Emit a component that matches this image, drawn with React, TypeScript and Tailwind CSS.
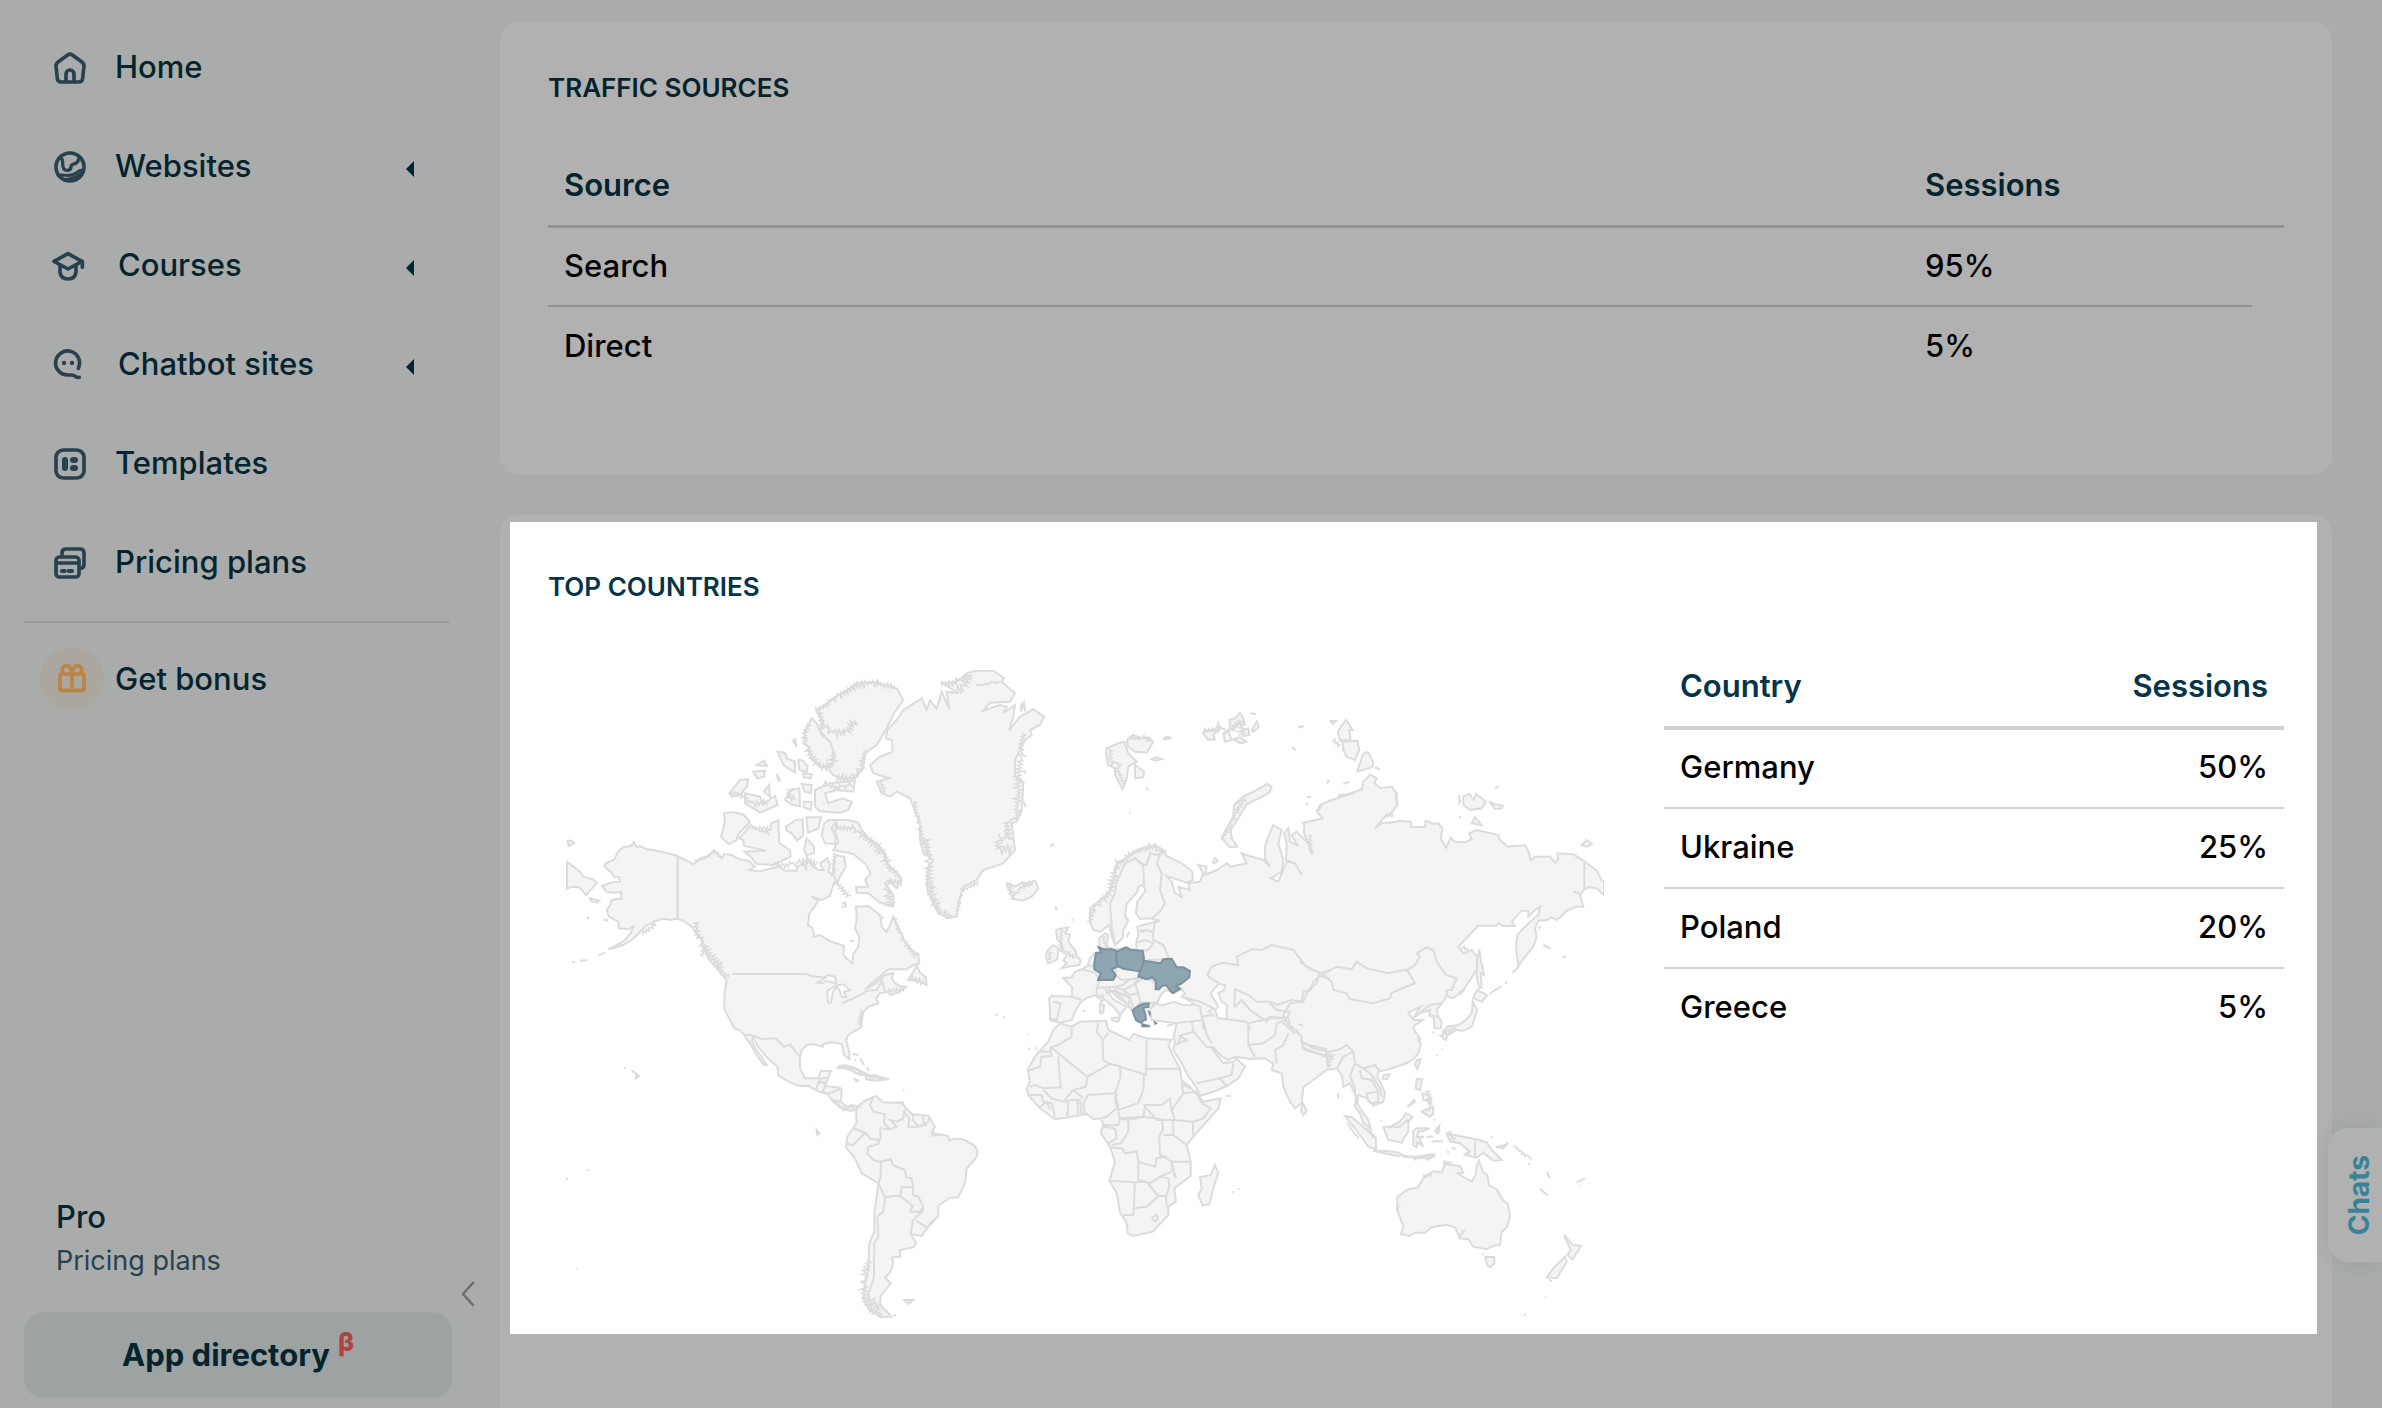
import React from 'react';

type Origin = [number, number];

// Outlines are digitised per map sheet, three units to one pixel.
const NW: Origin = [540, 650];
const GREENLAND: Origin = [700, 650];
const EUROPE: Origin = [1000, 700];
const SIBERIA: Origin = [1280, 680];
const AMERICAS: Origin = [540, 940];
const AFRICA: Origin = [1000, 960];
const ASIA: Origin = [1300, 960];

const on = (origin: Origin, points: string): string =>
  points
    .trim()
    .split(/\s+/)
    .map((pair) => {
      const [x, y] = pair.split(',').map(Number);
      return `${(origin[0] + x / 3).toFixed(1)},${(origin[1] + y / 3).toFixed(1)}`;
    })
    .join(' ');

// Jagged line along a coast, used where the shore is cut by many inlets
const fjords = (origin: Origin, points: string, depth = 3): string => {
  const pts = on(origin, points).split(' ').map((p) => p.split(',').map(Number));
  const out: string[] = [];
  let step = 0;
  for (let i = 0; i < pts.length - 1; i++) {
    const [x1, y1] = pts[i];
    const [x2, y2] = pts[i + 1];
    const length = Math.hypot(x2 - x1, y2 - y1) || 1;
    const count = Math.max(1, Math.round(length / 1.8));
    for (let k = 0; k < count; k++) {
      const t = k / count;
      const noise = Math.abs(Math.sin(step * 12.9898) * 43758.5453) % 1;
      const offset = (step % 2 === 0 ? 1 : -1) * depth * noise;
      const x = x1 + (x2 - x1) * t - ((y2 - y1) / length) * offset;
      const y = y1 + (y2 - y1) * t + ((x2 - x1) / length) * offset;
      out.push(`${x.toFixed(1)},${y.toFixed(1)}`);
      step++;
    }
  }
  return out.join(' ');
};

const land: string[] = [
  // North and Central America
  on(NW, '413,618 385,610 340,600 320,598 300,588 291,592 281,577 272,588 250,592 235,604 222,630 197,640 194,650 215,668 222,680 238,682 240,695 215,697 186,708 200,725 222,728 243,726 245,745 215,750 210,765 200,780 207,800 235,815 237,835 265,838 280,830 272,850 255,870 235,882 210,897 225,893 250,885 275,870 300,845 320,825 340,818 355,810 372,806 390,810 413,806'),
  [
    on(NW, '413,618 460,643 480,625 505,618 522,600 535,615 545,625 553,612 575,615 600,628 625,632 645,650 628,660 660,664 695,655 720,650 735,662 770,662 772,650 790,640 798,655 800,620 815,645 835,660 850,660 840,640 862,625 870,645 865,665 875,675 882,650 885,615 912,620 918,650 905,670 895,690 880,705 870,738 845,750 815,740 835,752 820,775 808,790 804,825 818,835 822,860 840,855 870,873 912,888 910,915 925,930 937,940 940,912 955,890 958,860 945,835 950,810 948,770 985,768 1020,795 1025,830 1040,845 1050,825 1060,800 1075,835 1090,865 1100,885 1120,905 1135,912'),
    on(AMERICAS, '1135,45 1138,70 1115,78 1100,88 1045,88 1010,118 975,148 1000,135 1035,105 1060,98 1055,115 1065,130 1080,138 1098,140 1075,158 1050,165 1045,155 1020,160 1008,175 1015,190 985,200 970,215 965,240 962,262 925,285 918,300 928,335 928,357 912,345 905,312 875,307 850,312 848,320 820,312 800,315 785,330 780,350 780,385 795,415 835,415 843,393 872,393 865,415 855,438 900,443 905,450 903,485 920,500 935,495 955,500 948,510 930,512 905,505 880,485 862,462 830,452 805,438 778,438 750,427 715,407 712,380 680,352 650,315 640,290 635,300 645,325 665,350 680,375 672,375 650,345 630,310 612,285 600,270 583,265 565,230 553,205 553,165 560,120 530,85 505,55 490,10'),
    on(NW, '455,830 430,812 413,806'),
  ].join(' '),
  on(AMERICAS, '1105,120 1120,95 1130,78 1140,98 1158,112 1160,135 1145,128 1130,122'),
  // Arctic islands
  on(NW, '552,490 580,486 612,495 630,517 595,552 590,570 567,583 543,560 555,515'),
  on(NW, '632,525 640,530 665,545 690,540 695,520 715,510 718,580 750,600 752,620 720,635 700,645 650,642 630,618 612,605 678,602 612,588 610,570 598,565'),
  on(NW, '738,530 768,510 788,508 790,555 772,572 755,550 740,542'),
  on(NW, '800,502 843,502 835,535 805,548 800,520'),
  on(NW, '800,565 822,590 822,610 800,615 792,600'),
  on(NW, '852,522 865,510 890,510 875,535 888,560 885,582 855,580 845,555'),
  on(NW, '890,510 925,510 955,518 962,535 985,565 1015,585 1035,610 1042,640 1085,685 1070,715 1045,690 1035,700 1060,735 1060,770 1020,758 985,730 950,728 948,712 985,710 975,690 992,670 975,640 940,612 880,600 895,575 885,545'),
  on(NW, '830,185 850,170 885,140 915,125 950,100 1010,96 1070,115 1090,150 1062,190 1040,235 1010,285 975,310 970,355 945,385 905,388 880,375 865,358 880,320 870,280 840,240 850,215'),
  on(NW, '815,205 830,220 845,255 870,275 885,315 875,350 840,352 810,320 805,290 790,280 795,245'),
  on(NW, '945,392 940,425 890,420 855,430 865,460 910,445 935,455 925,480 900,488 840,484 825,470 825,420 870,400'),
  on(NW, '568,430 600,390 625,388 620,410 600,435 575,440'),
  on(NW, '615,430 660,440 670,462 705,438 713,465 660,488 615,460'),
  on(NW, '672,425 687,405 690,440'),
  on(NW, '755,418 778,415 780,468 758,465 735,450'),
  on(NW, '785,402 815,405 812,430 795,425'),
  on(NW, '790,455 815,455 812,480 792,472'),
  on(NW, '650,345 672,332 680,348'),
  on(NW, '640,365 675,362 672,380 652,385'),
  on(NW, '713,305 735,308 740,325 765,335 765,368 745,355 730,345'),
  on(NW, '775,330 790,332 803,350 800,365 778,360'),
  on(NW, '790,370 815,373 812,385 792,382'),
  on(NW, '758,272 766,268 770,290'),
  on(NW, '710,372 720,390 715,393'),
  on(NW, '83,572 95,572 103,580 86,588'),
  on(NW, '81,635 120,665 130,680 160,688 170,700 150,722 138,735 118,712 95,710 81,716'),
  on(NW, '150,745 178,752 172,758 155,755'),
  // Greenland and Iceland
  on(GREENLAND, '610,180 665,145 680,180 690,150 710,175 725,125 748,178 740,125 775,130 730,100 770,95 800,70 825,62 880,62 912,85 905,95 945,130 930,155 870,158 850,182 900,165 920,170 910,190 945,165 940,200 928,240 960,200 1000,178 1032,200 1020,225 990,240 995,255 975,270 960,300 945,330 945,380 970,395 968,440 965,480 950,515 935,520 940,560 945,600 910,640 850,660 830,690 790,710 775,760 770,800 745,805 715,790 695,750 680,710 685,650 700,630 670,610 660,570 660,520 630,445 590,425 570,440 545,430 530,395 568,385 520,370 510,345 540,320 578,305 575,270 558,265 562,240 590,210'),
  on(EUROPE, '20,550 45,560 65,548 80,550 105,542 115,565 95,590 68,602 35,595 45,580 25,570'),
  // Svalbard, Franz Josef Land, Novaya Zemlya
  on(EUROPE, '320,145 355,130 372,125 385,160 410,185 385,200 380,235 368,268 345,225 345,205 325,195 318,165'),
  on(EUROPE, '380,120 400,105 425,115 445,112 460,125 440,158 405,155 385,140'),
  on(EUROPE, '405,195 432,215 430,232 405,235'),
  on(EUROPE, '490,118 500,110 515,114'),
  on(EUROPE, '455,178 470,172 485,178 465,182'),
  on(EUROPE, '608,98 630,90 645,92 655,70 658,90 640,105 645,118 625,120'),
  on(EUROPE, '670,100 685,95 695,120 675,125'),
  on(EUROPE, '688,60 705,55 720,40 728,50 735,72 710,75 700,90 690,80'),
  on(EUROPE, '725,92 745,85 748,105 730,108'),
  on(EUROPE, '755,90 770,65 777,80 760,95'),
  on(EUROPE, '700,118 720,112 738,125 722,130'),
  on(EUROPE, '665,415 685,375 700,350 702,315 730,290 780,265 800,252 815,260 808,278 770,298 740,312 715,355 692,390 695,415 712,440 690,442'),
  on(SIBERIA, '173,155 198,120 218,150 208,150 212,178 180,182'),
  on(SIBERIA, '188,185 232,182 238,210 225,240 200,230 190,210'),
  on(SIBERIA, '232,275 248,225 258,215 268,222 280,250 278,260'),
  on(SIBERIA, '550,350 568,342 582,360 588,342 618,365 605,385 570,390 550,375'),
  on(SIBERIA, '628,365 645,373 668,377 665,385 645,387'),
  on(SIBERIA, '575,430 585,412 605,435'),
  on(SIBERIA, '905,495 920,480 935,492 920,500'),
  // Mainland Eurasia
  [
    on(EUROPE, '150,935 148,895 155,887 215,890 217,862 190,835 215,832 225,815 245,808 262,798 270,775 285,760 300,755 298,715 315,700 325,705 320,740 345,748 380,742 410,750 408,730 415,705 412,680 440,672 480,662 450,655 420,657 408,640 412,605 437,572 430,555 415,560 412,575 380,612 375,645 385,662 370,690 368,715 345,735 335,710 328,675 300,695 280,690 270,665 270,625 300,600 330,575 345,520 350,490 385,470 410,450 440,440 465,435 490,450 500,468 545,490 577,515 578,540 560,548 500,528 515,545 525,580 545,590 535,560 570,570 565,550 600,545 610,520 595,495 620,500 615,525 650,510 680,490 690,500 740,490 725,460 745,467 790,480 810,500 795,475 795,440 805,410 820,375 845,390 835,430 850,480 845,515 812,535 835,545 860,485 885,490 905,525 885,490 858,480 860,430 852,400 865,385 870,425 892,435 875,405 890,395 915,420 930,435 935,465 925,430 912,400 912,370'),
    on(SIBERIA, '70,428 128,415 112,395 120,375 150,362 200,345 245,328 250,305 270,284 290,295 283,308 300,325 335,320 350,340 352,375 335,398 310,415 285,445 305,430 350,425 355,422 392,425 395,440 435,442 437,422 460,432 475,430 487,445 482,475 498,503 512,473 525,485 555,487 575,478 568,460 590,450 655,465 658,478 683,500 735,496 745,512 752,540 765,530 810,530 825,548 835,538 832,520 880,523 915,545 950,572 965,600 972,605 972,645 950,625 925,622 912,630 900,645 910,680 890,680 860,692 832,720 815,712 800,720 775,722 765,745 770,770 760,800 735,830 715,858 708,800 712,765 740,735 775,705 780,680 765,690 745,710 745,692 725,692 695,725 705,738 670,738 655,730 650,737 595,737 535,800 550,820 575,810 592,830 590,870 577,890 540,945'),
    on(ASIA, '495,85 460,115 440,108 425,130 410,150 415,170 425,185 422,205 403,205 402,175 388,165 390,150 360,160 340,175 345,165 362,140 325,158 340,180 368,180 340,200 345,215 360,235 362,255 355,280 342,295 320,310 290,320 265,328 235,335 232,350 245,375 255,400 250,425 220,437 200,415 175,405 172,430 190,460 205,480 212,505 190,490 180,460 165,440 168,410 150,370 130,380 125,345 110,325 80,330 50,352 10,382'),
    on(AFRICA, '905,430 885,445 870,425 850,380 845,340 815,330 820,312 795,295 750,297 705,290 685,300 665,290 640,262 635,262 650,285 670,310 700,305 708,295 735,320 715,355 680,378 640,395 600,408 590,385 560,340 545,310 520,270 525,240 520,235 530,190 495,185 455,180 450,150 465,128 420,130 425,145 435,170 425,188 410,180 398,155 385,135 350,110 330,88 320,92 340,118 380,140 372,150 360,165 345,145 310,115 290,105 262,112 240,130 225,155 215,180 180,188 150,180'),
  ].join(' '),
  // British Isles and Mediterranean islands
  on(EUROPE, '168,690 190,685 205,682 195,700 210,705 205,725 225,750 232,770 242,780 238,795 205,800 185,805 200,790 190,782 200,765 180,750 185,730 172,720'),
  on(EUROPE, '140,755 160,735 175,745 172,778 145,790 138,770'),
  on(EUROPE, '300,888 308,885 310,900 303,905'),
  on(EUROPE, '300,912 312,915 310,938 300,940'),
  on(AFRICA, '335,175 360,172 355,185 335,180'),
  // Africa and Madagascar
  on(AFRICA, '180,190 215,200 240,185 318,182 325,210 388,240 400,222 440,235 515,240 505,255 520,290 540,325 545,360 570,380 600,415 610,425 662,415 655,445 580,530 560,555 572,605 572,648 523,685 528,725 505,740 505,765 458,815 400,828 383,820 380,790 360,757 350,700 328,662 345,605 330,560 303,520 310,490 300,475 280,478 260,462 215,470 165,478 120,445 85,405 80,385 90,365 83,330 105,290 145,245 160,210'),
  on(AFRICA, '645,615 655,640 640,685 628,732 608,737 595,705 605,685 600,652 632,645'),
  on(AFRICA, '908,430 920,452 910,465 903,450'),
  // South America and the Caribbean
  on(AMERICAS, '955,500 970,485 1008,468 1030,487 1085,490 1115,522 1165,527 1185,560 1175,578 1225,588 1228,602 1240,596 1270,598 1305,618 1313,635 1308,655 1280,685 1275,730 1255,772 1230,773 1195,797 1195,828 1165,860 1145,888 1112,883 1128,908 1120,922 1080,930 1080,950 1055,952 1060,970 1050,998 1035,1012 1052,1030 1022,1068 1020,1090 1030,1105 1055,1130 1020,1132 985,1105 970,1075 975,1030 985,990 988,910 1003,875 1003,825 1015,730 965,700 945,655 918,622 922,590 940,565 950,548 948,510'),
  on(AMERICAS, '1092,1080 1120,1080 1105,1092'),
  on(AMERICAS, '890,385 912,375 940,382 985,405 960,405 930,390 905,383'),
  on(AMERICAS, '978,408 1005,405 1030,415 1048,418 1005,422 980,418'),
  on(AMERICAS, '945,418 958,422 948,423'),
  on(AMERICAS, '287,400 297,408 288,415'),
  on(AMERICAS, '830,570 838,580 832,585'),
  // Japan, Sakhalin, South East Asia
  on(SIBERIA, '598,808 603,845 612,885 602,880 605,920 598,925 590,890 592,840'),
  on(ASIA, '530,90 562,105 545,125 520,115'),
  on(ASIA, '518,125 532,150 522,180 515,200 490,212 470,210 445,225 430,215 440,200 475,195 495,182 515,160'),
  on(ASIA, '430,215 442,225 438,240 428,235'),
  on(ASIA, '350,300 362,298 352,327 345,315'),
  on(ASIA, '250,345 268,342 262,357 248,356'),
  on(ASIA, '350,357 367,358 362,378 360,390 347,385'),
  on(ASIA, '367,400 390,405 392,425 370,420'),
  on(ASIA, '365,455 385,445 398,440 400,460 390,470'),
  on(ASIA, '322,442 342,420 345,425'),
  on(ASIA, '135,468 155,472 200,510 228,535 228,568 205,560 180,525'),
  on(ASIA, '220,572 250,572 290,577 305,583 295,588 250,580'),
  on(ASIA, '310,588 350,590 395,583 405,585 365,595 312,590'),
  on(ASIA, '378,600 405,588 385,598'),
  on(ASIA, '250,502 270,500 300,485 318,460 338,470 325,485 325,515 312,535 305,548 265,540'),
  on(ASIA, '340,512 350,505 388,505 372,512 355,515 350,530 372,530 358,535 370,560 352,545 350,562 340,555'),
  on(ASIA, '405,515 418,498 415,520'),
  on(ASIA, '440,522 465,525 490,530 530,538 560,547 575,570 605,600 580,602 550,578 530,593 495,585 510,575 480,550 450,545'),
  on(ASIA, '588,562 615,555 625,548 610,565'),
  // Australia, Tasmania, New Zealand
  on(ASIA, '292,712 320,690 355,682 370,655 400,633 425,638 435,612 480,618 490,638 472,640 515,665 528,642 530,615 537,603 548,635 562,645 567,675 592,690 605,715 625,735 630,770 622,800 605,815 600,855 578,858 560,868 520,860 505,838 480,835 465,802 440,794 395,802 375,818 345,818 328,828 303,822 310,800 292,750'),
  on(ASIA, '555,890 583,892 583,910 570,922 562,915'),
  on(ASIA, '792,825 812,848 820,855 843,857 832,875 818,898 802,885 812,870'),
  on(ASIA, '795,890 800,905 788,925 770,955 740,952 760,925'),
];

const water: string[] = [
  // Black Sea, Caspian, Great Lakes
  on(EUROPE, '470,912 485,880 500,870 520,880 545,868 555,880 545,890 575,905 575,915 550,915 520,905 490,915'),
  on(EUROPE, '640,870 655,852 675,855 672,870 655,880 665,905 680,915 680,958 655,955 645,930 655,920 640,895 632,880'),
  on(AMERICAS, '832,128 850,118 862,105 885,110 890,130 860,122 845,130'),
  on(AMERICAS, '862,152 880,142 888,142 878,158 873,188 864,188'),
  on(AMERICAS, '888,137 910,133 930,150 912,155 918,172 905,170 898,150'),
];

const borders: string[] = [
  on(NW, '413,618 413,806'),
  on(AMERICAS, '575,102 800,102 812,108 860,114'),
  on(AMERICAS, '905,190 935,178 965,162 980,152 1010,150 1025,122 1035,152'),
  on(AMERICAS, '612,285 635,285 665,297 708,295 732,320 750,313 770,340 783,348'),
  on(AMERICAS, '828,450 835,430 852,425 855,440 848,455 865,462 900,447'),
  on(AMERICAS, '835,430 843,415 865,415'),
  on(AMERICAS, '875,480 903,485'),
  on(AMERICAS, '1000,470 990,495 1000,515 1035,522 1032,550 1050,568 1070,560 1050,540 1072,545 1090,535 1092,515 1100,505'),
  on(AMERICAS, '1092,515 1108,535 1105,562 1135,560 1118,540 1120,525'),
  on(AMERICAS, '1148,527 1152,555 1165,545 1168,530'),
  on(AMERICAS, '1130,558 1160,555'),
  on(AMERICAS, '1050,568 1020,565 1022,590 1015,612 985,620 982,640 1000,660 1022,665 1053,658 1058,675 1095,690 1098,712 1115,715 1120,742 1118,765 1135,770 1150,800 1148,812 1118,842 1112,883'),
  on(AMERICAS, '940,565 975,578 992,597 1018,600'),
  on(AMERICAS, '975,578 940,615 922,612'),
  on(AMERICAS, '1022,665 1022,710 1015,730 1035,772 1060,768 1080,768 1085,742 1118,742'),
  on(AMERICAS, '1080,768 1118,797 1110,815 1140,815 1150,800'),
  on(AMERICAS, '1128,842 1160,862'),
  on(AMERICAS, '1035,772 1030,815 1012,830 1015,890 1003,910 1002,1010 985,1065 995,1100'),
  // Europe
  on(EUROPE, '345,735 335,680 330,610 345,580 350,545 375,490 405,475 430,495 432,555'),
  on(EUROPE, '405,475 420,490 440,495 450,460 470,465 490,455'),
  on(EUROPE, '480,465 470,490 485,520 480,570 495,610 480,635 455,655'),
  on(EUROPE, '465,665 460,695 460,720 490,735 505,770 490,782'),
  on(EUROPE, '415,695 440,690 462,698'),
  on(EUROPE, '408,728 435,720 460,728 445,750 430,752'),
  on(EUROPE, '440,780 500,778'),
  on(EUROPE, '160,905 182,910 170,960 150,955'),
  on(EUROPE, '215,890 245,900'),
  on(EUROPE, '245,808 285,818 300,840 290,865 290,890 298,895'),
  on(EUROPE, '262,795 285,800'),
  on(EUROPE, '290,865 315,862 345,860 370,855 385,840 415,835 400,855 370,870 345,862'),
  on(EUROPE, '350,808 345,825 365,840 415,835'),
  on(EUROPE, '315,862 320,880 345,870 370,885 390,895 400,920 410,940'),
  on(EUROPE, '370,870 390,885 415,880 405,850 430,835 455,840 475,865'),
  on(EUROPE, '415,880 420,905 455,910 475,905'),
  on(EUROPE, '390,895 385,915 400,935'),
  on(EUROPE, '340,868 385,915 395,935'),
  on(EUROPE, '355,885 375,880 395,900'),
  on(EUROPE, '410,915 440,908 465,915 450,925'),
  // Caucasus, Middle East, Central Asia
  on(EUROPE, '545,890 600,905 640,925 625,935 645,950'),
  on(EUROPE, '575,910 600,920 605,950 640,945'),
  on(EUROPE, '605,950 608,960 610,990'),
  on(EUROPE, '632,835 622,825 635,800 665,788 715,795 710,770 755,748 785,750 815,735 880,750 915,795 960,820 990,810'),
  on(EUROPE, '632,835 660,852'),
  on(EUROPE, '703,922 705,868 745,885 770,905 810,905 830,915 875,900 910,905 925,870 950,850 955,825 990,838'),
  on(EUROPE, '705,922 725,900 750,930 800,965 808,950 860,955 870,935 830,930 810,910'),
  on(EUROPE, '680,958 740,965 750,990'),
  on(AFRICA, '525,190 610,180 620,225 635,250'),
  on(AFRICA, '575,185 580,215 545,225 530,255'),
  on(AFRICA, '580,215 620,260 640,262'),
  on(AFRICA, '535,225 560,240 525,255'),
  on(AFRICA, '590,370 660,355 680,378'),
  on(AFRICA, '660,355 695,345 700,310'),
  on(AFRICA, '745,190 745,255 765,290'),
  on(AFRICA, '745,255 790,250 825,225 830,190 860,180'),
  on(AFRICA, '745,190 810,175 865,175 870,195 905,230 905,250 980,268'),
  on(AFRICA, '865,220 850,255 825,270 830,310'),
  on(AFRICA, '905,250 915,270 980,290'),
  // China, Mongolia, Korea, Indochina
  on(ASIA, '70,42 40,65 32,90 10,95 5,125 -30,130 -50,165 -35,195'),
  on(ASIA, '0,5 30,28 70,42 110,20 155,28 170,5 200,25 265,40 320,28 345,70 275,98 270,115 220,130 150,118 140,100 100,90 95,65 70,42'),
  on(ASIA, '315,35 345,15 360,-10 350,-20 380,-38 400,-30 410,5 438,45 470,55 455,90 440,90 440,108'),
  on(ASIA, '360,158 390,135 425,130'),
  on(ASIA, '388,165 415,170'),
  on(ASIA, '0,240 40,265 85,275 120,268 140,255 160,275 165,310 190,325 225,315 240,335'),
  on(ASIA, '5,262 40,275 85,290 105,285'),
  on(ASIA, '78,265 85,325'),
  on(ASIA, '160,275 130,290 110,325'),
  on(ASIA, '165,310 150,345 165,385 165,405'),
  on(ASIA, '180,330 185,355 215,360 235,395 235,425 215,430'),
  on(ASIA, '190,325 215,345 240,385 245,410'),
  on(ASIA, '235,395 200,400 205,425'),
  on(ASIA, '525,538 525,592'),
  on(ASIA, '270,500 300,500 325,478'),
  on(SIBERIA, '913,548 913,630'),
  // Africa
  on(AFRICA, '215,202 215,230 175,255 152,262 152,275 120,275'),
  on(AFRICA, '152,262 262,350 330,312 360,318'),
  on(AFRICA, '152,275 155,288 125,290 120,320 85,332'),
  on(AFRICA, '175,290 182,382 130,385 105,375 88,380'),
  on(AFRICA, '262,350 258,380 220,390 190,425 155,415 130,390'),
  on(AFRICA, '295,188 290,215 308,240 310,300 330,312 355,318 438,345 440,235'),
  on(AFRICA, '440,326 540,326'),
  on(AFRICA, '308,240 325,218'),
  on(AFRICA, '360,318 362,350 345,400 265,405 250,430 255,462'),
  on(AFRICA, '432,345 430,390 415,430 355,450 345,420 350,400'),
  on(AFRICA, '430,435 485,435 510,415 515,450 550,400 545,370 570,385'),
  on(AFRICA, '550,400 590,395 605,430 632,445 610,475 580,485 525,480 515,450'),
  on(AFRICA, '355,455 360,475 430,470 435,440 470,480 525,480'),
  on(AFRICA, '345,405 355,440 320,470 305,475'),
  on(AFRICA, '310,495 355,495 360,475 385,480 385,515 362,550 335,555'),
  on(AFRICA, '310,500 345,505 350,535 325,550'),
  on(AFRICA, '385,480 430,470 485,478 490,505 478,530 480,585 495,590 470,595 465,620 415,605 410,575 375,580 365,565 335,563'),
  on(AFRICA, '490,525 520,525 560,555'),
  on(AFRICA, '520,480 520,525'),
  on(AFRICA, '578,485 580,530'),
  on(AFRICA, '480,585 515,605 570,605'),
  on(AFRICA, '415,605 415,660 450,670 480,650 515,635 515,600'),
  on(AFRICA, '328,662 400,667 440,665'),
  on(AFRICA, '405,670 400,765 370,765'),
  on(AFRICA, '400,745 440,740 475,708 445,672'),
  on(AFRICA, '475,708 498,708 508,680 505,655 480,650'),
  on(AFRICA, '498,708 500,740'),
  on(AFRICA, '455,775 468,765 475,775 465,785 455,775'),
  on(AFRICA, '515,605 528,655 520,640'),
  on(AFRICA, '85,405 125,405 130,425 155,430 165,470'),
  on(AFRICA, '120,440 140,425 150,450'),
  on(AFRICA, '190,425 215,420 240,420 245,462'),
  on(AFRICA, '205,425 202,470'),
  on(AFRICA, '232,420 235,465'),
  on(AFRICA, '220,390 250,415'),
];

const rugged: string[] = [
  fjords(NW, '460,820 475,850 490,880 510,910 525,935 550,958', 5),
  fjords(NW, '310,855 330,835 350,808', 4),
  fjords(NW, '465,638 500,620 525,603 545,620', 2),
  fjords(NW, '830,185 885,142 915,125 960,102 1010,98 1070,118', 4),
  fjords(NW, '832,190 850,225 880,245 920,245 950,210', 5),
  fjords(NW, '800,220 795,260 810,310 840,350 880,345 875,300', 4),
  fjords(NW, '970,300 968,350 940,388 885,380', 4),
  fjords(NW, '850,405 895,412 940,400', 4),
  fjords(NW, '570,435 600,430 640,460 690,455', 4),
  fjords(NW, '740,420 745,440 770,440', 5),
  fjords(NW, '635,540 680,530 690,560', 3),
  fjords(NW, '890,540 935,530 985,565 1030,610 1045,650 1085,690', 4),
  fjords(NW, '1085,690 1040,700 1050,740 1055,775', 5),
  fjords(NW, '700,650 760,640 800,630 835,645', 4),
  fjords(NW, '1060,805 1090,865 1130,925', 3),
  fjords(NW, '880,610 885,690 930,745', 3),
  fjords(GREENLAND, '640,455 660,520 668,570 690,620', 3),
  fjords(GREENLAND, '672,570 685,600 690,650 688,700 700,750 730,795 765,800', 5),
  fjords(GREENLAND, '770,800 785,720 840,695', 2),
  fjords(GREENLAND, '965,250 965,320 955,380 955,430 950,500 920,520', 4),
  fjords(GREENLAND, '910,520 935,560 895,570 900,600 940,600', 6),
  fjords(GREENLAND, '725,110 770,92 810,75 790,115 765,120', 5),
  fjords(GREENLAND, '830,110 870,98 905,95', 2),
  fjords(GREENLAND, '535,395 560,430', 4),
  fjords(EUROPE, '275,670 275,630 330,575 350,495 400,460 460,438 500,462', 4),
  fjords(EUROPE, '25,550 35,590 70,555 105,548', 3),
  fjords(EUROPE, '325,150 335,190 370,190', 4),
  fjords(EUROPE, '385,120 430,110 460,125', 3),
  fjords(EUROPE, '345,205 365,230 372,260', 3),
  fjords(EUROPE, '612,98 650,85 690,90 720,60 728,110', 4),
  fjords(EUROPE, '672,415 690,380 710,330 735,290', 3),
  fjords(EUROPE, '180,690 185,745 230,775', 3),
  fjords(EUROPE, '145,755 150,785', 3),
  fjords(EUROPE, '305,710 320,742', 3),
  fjords(SIBERIA, '115,400 125,375', 3),
  fjords(SIBERIA, '175,350 225,335', 2),
  fjords(SIBERIA, '155,185 185,200', 4),
  fjords(SIBERIA, '315,410 345,405', 3),
  fjords(SIBERIA, '345,335 352,375', 2),
  fjords(SIBERIA, '880,640 905,640', 2),
  fjords(SIBERIA, '85,465 98,525', 3),
  fjords(SIBERIA, '545,805 575,815', 3),
  fjords(AMERICAS, '980,960 975,1020 975,1070 990,1105 1030,1130', 5),
  fjords(AMERICAS, '990,1085 1025,1110', 6),
  fjords(AMERICAS, '525,80 570,115', 4),
  fjords(AMERICAS, '485,10 490,55', 3),
  fjords(AMERICAS, '960,210 962,262', 3),
  fjords(AMERICAS, '1045,160 1098,140', 4),
  fjords(AMERICAS, '1110,120 1160,125', 5),
  fjords(AMERICAS, '895,380 940,385 985,408 1040,418', 2),
  fjords(AMERICAS, '880,488 910,505 950,500', 3),
  fjords(AMERICAS, '1175,590 1205,583', 2),
  fjords(ASIA, '75,285 95,290 85,325', 4),
  fjords(ASIA, '375,395 395,430 385,460', 4),
  fjords(ASIA, '430,235 435,212 475,205', 4),
  fjords(ASIA, '350,235 362,255', 2),
  fjords(ASIA, '370,655 400,640', 3),
  fjords(ASIA, '430,612 460,608', 3),
  fjords(ASIA, '288,735 293,755', 3),
  fjords(ASIA, '485,830 495,805', 3),
  fjords(ASIA, '140,490 180,540', 1),
  fjords(ASIA, '200,505 225,535', 3),
  fjords(ASIA, '440,520 470,545', 4),
  fjords(ASIA, '405,515 425,515', 4),
  fjords(ASIA, '640,560 700,600', 2),
  fjords(ASIA, '495,583 515,580', 2),
];

const islets: string[] = [
  on(NW, '140,803 148,806'), on(NW, '175,917 195,908'), on(NW, '95,935 105,937'), on(NW, '120,932 142,930'),
  on(NW, '205,898 240,880'), on(NW, '930,875 940,870'), on(NW, '190,808 205,812'), on(NW, '1026,800 1030,806'),
  on(NW, '905,762 915,758 918,768 905,772'),
  on(GREENLAND, '1050,588 1062,582'), on(GREENLAND, '1065,772 1072,778'), on(GREENLAND, '965,160 962,185 972,160 976,185'),
  on(GREENLAND, '970,360 978,370'), on(GREENLAND, '970,455 978,470'), on(GREENLAND, '965,312 978,320'),
  on(EUROPE, '440,270 444,263'), on(EUROPE, '388,340 392,338'), on(EUROPE, '165,625 171,628'), on(EUROPE, '215,660 220,658'),
  on(EUROPE, '750,40 768,42'), on(EUROPE, '895,82 910,78 902,84'), on(EUROPE, '875,142 888,150'), on(EUROPE, '980,248 988,242'),
  on(EUROPE, '638,482 645,475 653,483 642,490 638,482'), on(EUROPE, '380,712 388,695'), on(EUROPE, '425,688 432,700'),
  on(EUROPE, '10,952 15,952'), on(EUROPE, '82,1003 86,1003'), on(EUROPE, '248,933 256,933'), on(EUROPE, '500,978 525,970'),
  on(SIBERIA, '148,123 168,123 160,131 148,123'), on(SIBERIA, '285,262 300,268'), on(SIBERIA, '190,312 208,305'),
  on(SIBERIA, '80,350 92,352'), on(SIBERIA, '80,370 84,374'), on(SIBERIA, '645,325 655,320'), on(SIBERIA, '538,345 538,368 543,360'),
  on(SIBERIA, '538,408 543,415'), on(SIBERIA, '790,795 812,806'), on(SIBERIA, '848,832 858,830'), on(SIBERIA, '775,745 782,740'),
  on(SIBERIA, '698,878 716,860'), on(SIBERIA, '675,910 680,906'), on(SIBERIA, '628,942 665,918'), on(SIBERIA, '140,310 148,302'),
  on(AMERICAS, '252,385 258,385'), on(AMERICAS, '275,392 284,398'), on(AMERICAS, '70,716 84,716'), on(AMERICAS, '142,690 148,690'),
  on(AMERICAS, '109,986 113,986'), on(AMERICAS, '1366,224 1373,224'), on(AMERICAS, '1088,451 1093,451'), on(AMERICAS, '938,342 955,345'),
  on(AMERICAS, '945,358 948,362'), on(AMERICAS, '960,355 972,375'), on(AMERICAS, '980,382 988,393'), on(AMERICAS, '1062,487 1092,487'),
  on(AMERICAS, '1168,855 1178,840'), on(AMERICAS, '1060,1126 1068,1126'),
  on(AFRICA, '85,266 92,266'), on(AFRICA, '106,266 112,264'), on(AFRICA, '680,408 692,408'), on(AFRICA, '697,696 702,696'),
  on(AFRICA, '713,688 718,687'), on(AFRICA, '848,188 885,220'), on(AFRICA, '862,195 895,215'), on(AFRICA, '895,193 908,196'),
  on(ASIA, '115,400 115,415'), on(ASIA, '243,480 246,484'), on(ASIA, '400,478 404,481'), on(ASIA, '410,288 412,284'),
  on(ASIA, '425,268 428,265'), on(ASIA, '397,218 403,217'), on(ASIA, '380,530 400,530'), on(ASIA, '395,544 430,544'),
  on(ASIA, '442,578 446,574'), on(ASIA, '455,562 468,568'), on(ASIA, '572,532 578,532'), on(ASIA, '740,635 750,655'),
  on(ASIA, '720,687 743,706'), on(ASIA, '830,668 855,655'), on(ASIA, '838,677 842,677'), on(ASIA, '748,960 756,963'),
  on(ASIA, '734,1010 739,1010'), on(ASIA, '672,1064 677,1064'), on(ASIA, '548,880 551,884'), on(ASIA, '684,613 690,613'),
  on(ASIA, '340,595 350,600'), on(ASIA, '370,595 405,583'),
];

const activeCountries: Record<string, string> = {
  Germany: on(EUROPE, '288,758 304,758 296,742 312,748 335,748 348,752 350,775 353,800 335,808 347,825 340,840 294,840 302,820 283,808 283,790'),
  Poland: on(EUROPE, '350,755 378,742 392,750 428,752 432,775 428,795 425,815 370,806 353,798 348,775'),
  Ukraine: on(EUROPE, '432,782 482,790 490,778 515,776 530,802 550,802 570,813 568,832 545,850 528,858 540,866 518,880 508,868 498,855 485,858 478,868 467,868 468,845 458,832 440,838 415,830'),
  Greece: on(EUROPE, '398,930 412,920 428,912 446,910 446,920 430,924 436,942 438,958 428,964 420,968 408,960 402,945'),
  Crete: on(EUROPE, '427,973 450,979 427,979'),
  Aegean: on(EUROPE, '447,936 450,938 449,942'),
  Rhodes: on(EUROPE, '465,968 468,970 466,971'),
};

const WorldMap: React.FC = () => (
  <svg
    viewBox="566 670 1038 652"
    className="block h-auto w-full"
    role="img"
    aria-label="Sessions by country"
    strokeWidth="2"
    strokeLinejoin="miter"
  >
    <g fill="#f4f4f4" stroke="#dcdcdc">
      {land.map((points, i) => (
        <polygon key={i} points={points} />
      ))}
    </g>
    <g fill="#fff" stroke="#dcdcdc">
      {water.map((points, i) => (
        <polygon key={i} points={points} />
      ))}
    </g>
    <g fill="none" stroke="#dcdcdc">
      {borders.map((points, i) => (
        <polyline key={i} points={points} />
      ))}
      {rugged.map((points, i) => (
        <polyline key={i} points={points} strokeWidth="1.6" />
      ))}
      {islets.map((points, i) => (
        <polyline key={i} points={points} />
      ))}
    </g>
    <g fill="#8ea5b2" stroke="#7d92a0">
      {Object.entries(activeCountries).map(([name, points]) => (
        <polygon key={name} points={points} />
      ))}
    </g>
  </svg>
);

const Icon: React.FC<{ children: React.ReactNode; className?: string }> = ({
  children,
  className = 'h-8 w-8 overflow-visible text-[#28414f]',
}) => (
  <svg
    viewBox="0 0 96 96"
    className={className}
    fill="none"
    stroke="currentColor"
    strokeWidth="11"
    strokeLinecap="round"
    strokeLinejoin="round"
    aria-hidden="true"
  >
    {children}
  </svg>
);

const HomeIcon = () => (
  <Icon>
    <path d="M41 9q7-5 14 0l28 20q8 6 7 14l-4 36q-1 11-12 11H22q-11 0-12-11L6 43q-1-8 7-14z" />
    <path d="M36 88V66a12 12 0 0 1 24 0v22" />
  </Icon>
);

const GlobeIcon = () => (
  <Icon>
    <circle cx="48" cy="48" r="42" />
    <path d="M20 20q6 5 6 12v6q0 20 13 20 12 0 12-11 0-6 8-8 12-2 14-12l4-9" strokeWidth="10" />
    <path d="M12 73q12-2 22 0 20 2 34-8 8-8 20-8M30 86q34-2 50-18" strokeWidth="9" />
  </Icon>
);

const CoursesIcon = () => (
  <Icon>
    <path d="M0 34L42 11l42 23-42 23z" />
    <path d="M18 46v20q2 20 24 21 22-1 24-21V46M85 34v18" />
  </Icon>
);

const ChatbotIcon = () => (
  <Icon>
    <path d="M73 58a36 36 0 1 0-31 20h10q8 0 12 4 6 5 12 3" />
    <path d="M30 42h.1M54 42h.1" strokeWidth="13" />
  </Icon>
);

const TemplatesIcon = () => (
  <Icon>
    <rect x="6" y="6" width="84" height="84" rx="22" />
    <path d="M33 36v24" strokeWidth="18" />
    <path d="M57 36h6M57 60h6" strokeWidth="18" />
  </Icon>
);

const PricingIcon = () => (
  <Icon>
    <path d="M24 24v-6q0-12 12-12h42q12 0 12 12v34q0 12-10 12" />
    <rect x="6" y="30" width="69" height="60" rx="10" />
    <path d="M8 48h64" />
    <path d="M24 72h8M44 72h10" strokeWidth="12" />
  </Icon>
);

const GiftIcon = () => (
  <Icon className="h-8 w-8 text-[#b98544]">
    <rect x="12" y="33" width="72" height="49" rx="4" />
    <path d="M48 33v49M48 31Q44 7 30 8q-16 3-9 22M48 31Q52 7 66 8q16 3 9 22" />
  </Icon>
);

interface NavItem {
  label: string;
  icon: React.FC;
  expandable?: boolean;
}

const navItems: NavItem[] = [
  { label: 'Home', icon: HomeIcon },
  { label: 'Websites', icon: GlobeIcon, expandable: true },
  { label: 'Courses', icon: CoursesIcon, expandable: true },
  { label: 'Chatbot sites', icon: ChatbotIcon, expandable: true },
  { label: 'Templates', icon: TemplatesIcon },
  { label: 'Pricing plans', icon: PricingIcon },
];

const sources = [
  { name: 'Search', share: '95%' },
  { name: 'Direct', share: '5%' },
];

const countries = [
  { name: 'Germany', share: '50%' },
  { name: 'Ukraine', share: '25%' },
  { name: 'Poland', share: '20%' },
  { name: 'Greece', share: '5%' },
];

const Sidebar: React.FC = () => (
  <aside className="flex w-[500px] shrink-0 flex-col text-[31px] font-medium text-[#03242f]">
    <nav className="pt-[18px]">
      {navItems.map(({ label, icon: ItemIcon, expandable }) => (
        <a key={label} href="#" className="flex h-[99px] items-center pl-[54px] pr-[86px]">
          <ItemIcon />
          <span className={expandable && label !== 'Websites' ? 'ml-8' : 'ml-[29px]'}>{label}</span>
          {expandable && (
            <svg viewBox="0 0 8 16" className="ml-auto mt-1 h-4 w-2" fill="currentColor" aria-hidden="true">
              <path d="M8 0v16L0 8z" />
            </svg>
          )}
        </a>
      ))}
      <hr className="ml-6 mr-[50px] mt-[9px] border-t-2 border-[#9c9e9d]" />
      <a href="#" className="mt-6 flex h-16 items-center pl-10">
        <span className="flex h-16 w-16 items-center justify-center rounded-full bg-[#aba69e]">
          <GiftIcon />
        </span>
        <span className="ml-[11px]">Get bonus</span>
      </a>
    </nav>

    <div className="mt-auto pb-2.5">
      <div className="pl-14 leading-10">Pro</div>
      <a href="#" className="mt-1 block pl-14 text-[27px] font-normal leading-10 text-[#28414f]">Pricing plans</a>
      <div className="flex h-[31px] items-start justify-end pr-6">
        <button type="button" aria-label="Collapse sidebar">
          <svg viewBox="0 0 16 26" className="h-[26px] w-4" fill="none" stroke="#6e6f6e" strokeWidth="2.6" strokeLinecap="round" strokeLinejoin="round">
            <path d="M13 2L3 13l10 11" />
          </svg>
        </button>
      </div>
      <button
        type="button"
        className="ml-6 flex h-[86px] w-[428px] items-center justify-center rounded-[20px] bg-[#9ca3a2] font-bold"
      >
        App directory
        <sup className="ml-2 text-[26px] font-extrabold text-[#b0433c]">β</sup>
      </button>
    </div>
  </aside>
);

const TrafficSources: React.FC = () => (
  <section className="rounded-[18px] bg-[#b1b1b1] px-12 pb-[89px] pt-[50px]">
    <h2 className="text-[26px] font-semibold leading-8 text-[#03242f]">TRAFFIC SOURCES</h2>
    <table className="mt-[41px] w-full border-collapse text-left text-[31px] font-medium">
      <thead className="text-[#03242f]">
        <tr className="h-[81px] border-b-[3px] border-[#8f9493]">
          <th className="w-[78.4%] px-4 font-semibold">Source</th>
          <th className="px-4 font-semibold">Sessions</th>
          <th className="w-8" />
        </tr>
      </thead>
      <tbody>
        {sources.map((source) => (
          <tr key={source.name} className="group h-20">
            <td className="border-b-2 border-[#8f9493] px-4 group-last:border-0">{source.name}</td>
            <td className="border-b-2 border-[#8f9493] px-4 group-last:border-0">{source.share}</td>
            <td />
          </tr>
        ))}
      </tbody>
    </table>
  </section>
);

const TopCountries: React.FC = () => (
  <section className="mt-10 grow rounded-t-[18px] bg-[#b1b1b1] pl-2.5 pr-[15px] pt-[7px]">
    <div className="bg-white pb-3 pl-[38px] pr-[33px] pt-[49px]">
      <h2 className="text-[26px] font-semibold leading-8 text-[#04344a]">TOP COUNTRIES</h2>
      <div className="mt-[41px] grid grid-cols-[9fr_5fr] items-start">
        <div className="pl-[18px] pr-[60px] pt-[26px]">
          <WorldMap />
        </div>
        <table className="w-full border-collapse text-[31px] font-medium text-black">
          <thead className="text-[#04344a]">
            <tr className="h-[84px] border-b-4 border-[#ccd3d1]">
              <th className="px-4 pt-0.5 text-left font-semibold">Country</th>
              <th className="px-4 pt-0.5 text-right font-semibold">Sessions</th>
            </tr>
          </thead>
          <tbody>
            {countries.map((country) => (
              <tr key={country.name} className="h-20 border-b-2 border-[#ccd3d1] last:border-0">
                <td className="px-4 pb-0.5">{country.name}</td>
                <td className="px-4 pb-0.5 text-right">{country.share}</td>
              </tr>
            ))}
          </tbody>
        </table>
      </div>
    </div>
  </section>
);

export default function App() {
  return (
    <div className="relative flex h-screen overflow-hidden bg-[#a9acab] font-['Inter',sans-serif]">
      <Sidebar />
      <main className="flex grow flex-col pr-[50px] pt-[22px]">
        <TrafficSources />
        <TopCountries />
      </main>
      <button
        type="button"
        className="absolute right-0 top-[1128px] flex h-[134px] w-[54px] items-center justify-center rounded-l-[20px] bg-[#b1b1b1] pl-2 text-[28px] font-bold text-[#37839a] shadow-[0_0_20px_rgba(0,40,40,0.1)]"
      >
        <span className="rotate-180 [writing-mode:vertical-rl]">Chats</span>
      </button>
    </div>
  );
}
